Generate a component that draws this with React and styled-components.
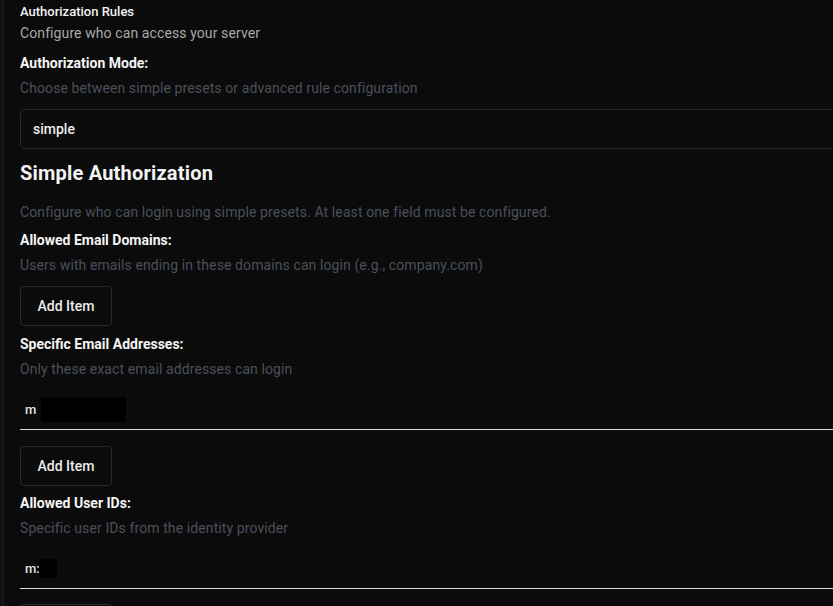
import React from "react";
import styled, { createGlobalStyle } from "styled-components";

const Global = createGlobalStyle`
  html, body { margin: 0; padding: 0; background: #111111; overflow: hidden; }
  body { font-family: Roboto, Inter, "Liberation Sans", sans-serif; }
`;

const Shell = styled.div`
  display: flex;
  height: 606px;
  overflow: hidden;
  padding-left: 3px;
`;

const Panel = styled.main`
  flex: 1;
  background: #0b0b0b;
  border-left: 1px solid #1f1f1f;
  padding: 4px 0 0 16px;
  min-width: 900px;
`;

const Title = styled.div`
  font-size: 13px;
  line-height: 16px;
  font-weight: 500;
  color: #f2f2f2;
`;

const Subtitle = styled.div`
  font-size: 14px;
  line-height: 20px;
  color: #a9a9a9;
  margin-top: 3px;
  letter-spacing: 0.1px;
`;

const Field = styled.div`
  display: flex;
  flex-direction: column;
  margin-top: ${(p) => p.$top ?? 8}px;
`;

const Label = styled.div`
  font-size: 14px;
  line-height: 20px;
  font-weight: 700;
  color: #f5f5f5;
`;

const Desc = styled.div`
  font-size: 14px;
  line-height: 20px;
  color: #4a505c;
  letter-spacing: 0.1px;
  margin-top: ${(p) => p.$top ?? 5}px;
`;

const Select = styled.div`
  margin-top: 11px;
  height: 38px;
  border: 1px solid #272727;
  border-radius: 5px;
  display: flex;
  align-items: center;
  padding-left: 12px;
  font-size: 14px;
  font-weight: 500;
  color: #ededed;
`;

const Heading = styled.h3`
  margin: 10px 0 0;
  font-size: 20px;
  line-height: 28px;
  font-weight: 700;
  letter-spacing: 0.2px;
  color: #f3f3f3;
`;

const Button = styled.button`
  align-self: flex-start;
  margin-top: ${(p) => p.$top ?? 11}px;
  height: 40px;
  width: 92px;
  background: transparent;
  border: 1px solid #2a2a2a;
  border-radius: 4px;
  color: #ececec;
  font-family: inherit;
  font-size: 14px;
  font-weight: 500;
  padding: 0;
`;

const Input = styled.div`
  margin-top: 11px;
  height: 39px;
  border-bottom: 1px solid #dcdcdc;
  display: flex;
  align-items: center;
  padding-left: 5px;
  font-size: 13px;
  font-weight: 500;
  color: #e4e4e4;
`;

const Redact = styled.span`
  display: inline-block;
  background: #000;
  width: ${(p) => p.$w}px;
  height: ${(p) => p.$h}px;
  margin-left: ${(p) => p.$ml ?? 0}px;
`;

export default function App() {
  return (
    <>
      <Global />
      <Shell>
        <Panel>
          <Title>Authorization Rules</Title>
          <Subtitle>Configure who can access your server</Subtitle>
          <Field $top={10}>
            <Label>Authorization Mode:</Label>
            <Desc>Choose between simple presets or advanced rule configuration</Desc>
            <Select>simple</Select>
          </Field>
          <Heading>Simple Authorization</Heading>
          <Desc $top={15}>Configure who can login using simple presets. At least one field must be configured.</Desc>
          <Field $top={8}>
            <Label>Allowed Email Domains:</Label>
            <Desc>Users with emails ending in these domains can login (e.g., company.com)</Desc>
            <Button>Add Item</Button>
          </Field>
          <Field $top={8}>
            <Label>Specific Email Addresses:</Label>
            <Desc>Only these exact email addresses can login</Desc>
            <Input>
              m<Redact $w={85} $h={25} $ml={5} />
            </Input>
            <Button $top={16}>Add Item</Button>
          </Field>
          <Field $top={7}>
            <Label>Allowed User IDs:</Label>
            <Desc>Specific user IDs from the identity provider</Desc>
            <Input>
              m:<Redact $w={18} $h={19} $ml={-1} />
            </Input>
            <Button $top={15}>Add Item</Button>
          </Field>
        </Panel>
      </Shell>
    </>
  );
}
